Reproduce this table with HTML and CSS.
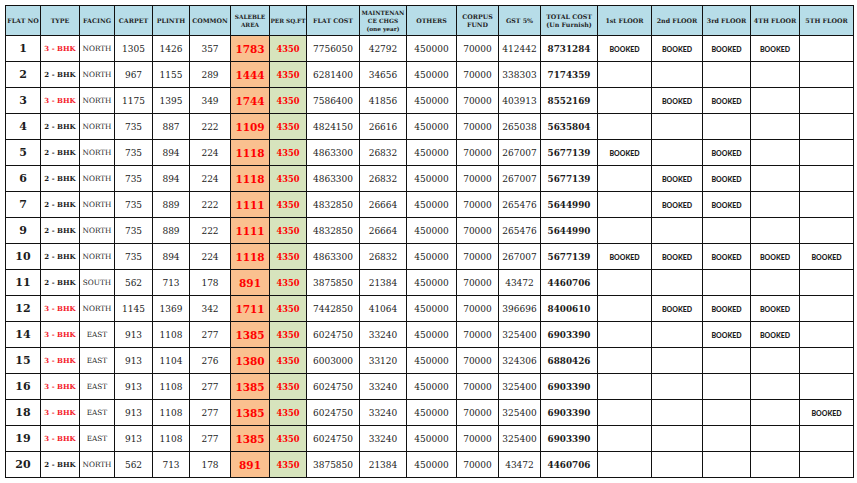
FILE: index.html
```html
<!DOCTYPE html>
<html>
<head>
<meta charset="utf-8">
<link rel="stylesheet" href="styles.css">
</head>
<body>
<table class="sheet">
<colgroup>
<col class="w35"><col class="w39"><col class="w35"><col class="w38"><col class="w37"><col class="w41"><col class="w39"><col class="w37"><col class="w53"><col class="w47"><col class="w50"><col class="w42"><col class="w42"><col class="w57"><col class="w54"><col class="w51"><col class="w48"><col class="w49"><col class="w54">
</colgroup>
<thead>
<tr>
<th>FLAT NO</th><th>TYPE</th><th>FACING</th><th>CARPET</th><th>PLINTH</th><th>COMMON</th><th class="sm">SALEBLE<br>AREA</th><th class="sm">PER SQ.FT</th><th>FLAT COST</th><th class="sm">MAINTENAN<br>CE CHGS<br>(one year)</th><th>OTHERS</th><th>CORPUS<br>FUND</th><th>GST 5%</th><th>TOTAL COST<br>(Un Furnish)</th><th>1st FLOOR</th><th>2nd FLOOR</th><th>3rd FLOOR</th><th>4TH FLOOR</th><th>5TH FLOOR</th>
</tr>
</thead>
<tbody>
<tr><td class="no">1</td><td class="type red">3 - BHK</td><td class="face">NORTH</td><td>1305</td><td>1426</td><td>357</td><td class="sale">1783</td><td class="rate">4350</td><td>7756050</td><td>42792</td><td>450000</td><td>70000</td><td>412442</td><td class="total">8731284</td><td class="bk">BOOKED</td><td class="bk">BOOKED</td><td class="bk">BOOKED</td><td class="bk">BOOKED</td><td></td></tr>
<tr><td class="no">2</td><td class="type">2 - BHK</td><td class="face">NORTH</td><td>967</td><td>1155</td><td>289</td><td class="sale">1444</td><td class="rate">4350</td><td>6281400</td><td>34656</td><td>450000</td><td>70000</td><td>338303</td><td class="total">7174359</td><td></td><td></td><td></td><td></td><td></td></tr>
<tr><td class="no">3</td><td class="type red">3 - BHK</td><td class="face">NORTH</td><td>1175</td><td>1395</td><td>349</td><td class="sale">1744</td><td class="rate">4350</td><td>7586400</td><td>41856</td><td>450000</td><td>70000</td><td>403913</td><td class="total">8552169</td><td></td><td class="bk">BOOKED</td><td class="bk">BOOKED</td><td></td><td></td></tr>
<tr><td class="no">4</td><td class="type">2 - BHK</td><td class="face">NORTH</td><td>735</td><td>887</td><td>222</td><td class="sale">1109</td><td class="rate">4350</td><td>4824150</td><td>26616</td><td>450000</td><td>70000</td><td>265038</td><td class="total">5635804</td><td></td><td></td><td></td><td></td><td></td></tr>
<tr><td class="no">5</td><td class="type">2 - BHK</td><td class="face">NORTH</td><td>735</td><td>894</td><td>224</td><td class="sale">1118</td><td class="rate">4350</td><td>4863300</td><td>26832</td><td>450000</td><td>70000</td><td>267007</td><td class="total">5677139</td><td class="bk">BOOKED</td><td></td><td class="bk">BOOKED</td><td></td><td></td></tr>
<tr><td class="no">6</td><td class="type">2 - BHK</td><td class="face">NORTH</td><td>735</td><td>894</td><td>224</td><td class="sale">1118</td><td class="rate">4350</td><td>4863300</td><td>26832</td><td>450000</td><td>70000</td><td>267007</td><td class="total">5677139</td><td></td><td class="bk">BOOKED</td><td class="bk">BOOKED</td><td></td><td></td></tr>
<tr><td class="no">7</td><td class="type">2 - BHK</td><td class="face">NORTH</td><td>735</td><td>889</td><td>222</td><td class="sale">1111</td><td class="rate">4350</td><td>4832850</td><td>26664</td><td>450000</td><td>70000</td><td>265476</td><td class="total">5644990</td><td></td><td class="bk">BOOKED</td><td class="bk">BOOKED</td><td></td><td></td></tr>
<tr><td class="no">9</td><td class="type">2 - BHK</td><td class="face">NORTH</td><td>735</td><td>889</td><td>222</td><td class="sale">1111</td><td class="rate">4350</td><td>4832850</td><td>26664</td><td>450000</td><td>70000</td><td>265476</td><td class="total">5644990</td><td></td><td></td><td></td><td></td><td></td></tr>
<tr><td class="no">10</td><td class="type">2 - BHK</td><td class="face">NORTH</td><td>735</td><td>894</td><td>224</td><td class="sale">1118</td><td class="rate">4350</td><td>4863300</td><td>26832</td><td>450000</td><td>70000</td><td>267007</td><td class="total">5677139</td><td class="bk">BOOKED</td><td class="bk">BOOKED</td><td class="bk">BOOKED</td><td class="bk">BOOKED</td><td class="bk">BOOKED</td></tr>
<tr><td class="no">11</td><td class="type">2 - BHK</td><td class="face">SOUTH</td><td>562</td><td>713</td><td>178</td><td class="sale">891</td><td class="rate">4350</td><td>3875850</td><td>21384</td><td>450000</td><td>70000</td><td>43472</td><td class="total">4460706</td><td></td><td></td><td></td><td></td><td></td></tr>
<tr><td class="no">12</td><td class="type red">3 - BHK</td><td class="face">NORTH</td><td>1145</td><td>1369</td><td>342</td><td class="sale">1711</td><td class="rate">4350</td><td>7442850</td><td>41064</td><td>450000</td><td>70000</td><td>396696</td><td class="total">8400610</td><td></td><td class="bk">BOOKED</td><td class="bk">BOOKED</td><td class="bk">BOOKED</td><td></td></tr>
<tr><td class="no">14</td><td class="type red">3 - BHK</td><td class="face">EAST</td><td>913</td><td>1108</td><td>277</td><td class="sale">1385</td><td class="rate">4350</td><td>6024750</td><td>33240</td><td>450000</td><td>70000</td><td>325400</td><td class="total">6903390</td><td></td><td></td><td class="bk">BOOKED</td><td class="bk">BOOKED</td><td></td></tr>
<tr><td class="no">15</td><td class="type red">3 - BHK</td><td class="face">EAST</td><td>913</td><td>1104</td><td>276</td><td class="sale">1380</td><td class="rate">4350</td><td>6003000</td><td>33120</td><td>450000</td><td>70000</td><td>324306</td><td class="total">6880426</td><td></td><td></td><td></td><td></td><td></td></tr>
<tr><td class="no">16</td><td class="type red">3 - BHK</td><td class="face">EAST</td><td>913</td><td>1108</td><td>277</td><td class="sale">1385</td><td class="rate">4350</td><td>6024750</td><td>33240</td><td>450000</td><td>70000</td><td>325400</td><td class="total">6903390</td><td></td><td></td><td></td><td></td><td></td></tr>
<tr><td class="no">18</td><td class="type red">3 - BHK</td><td class="face">EAST</td><td>913</td><td>1108</td><td>277</td><td class="sale">1385</td><td class="rate">4350</td><td>6024750</td><td>33240</td><td>450000</td><td>70000</td><td>325400</td><td class="total">6903390</td><td></td><td></td><td></td><td></td><td class="bk">BOOKED</td></tr>
<tr><td class="no">19</td><td class="type red">3 - BHK</td><td class="face">EAST</td><td>913</td><td>1108</td><td>277</td><td class="sale">1385</td><td class="rate">4350</td><td>6024750</td><td>33240</td><td>450000</td><td>70000</td><td>325400</td><td class="total">6903390</td><td></td><td></td><td></td><td></td><td></td></tr>
<tr><td class="no">20</td><td class="type">2 - BHK</td><td class="face">NORTH</td><td>562</td><td>713</td><td>178</td><td class="sale">891</td><td class="rate">4350</td><td>3875850</td><td>21384</td><td>450000</td><td>70000</td><td>43472</td><td class="total">4460706</td><td></td><td></td><td></td><td></td><td></td></tr>
</tbody>
</table>
<p class="note">Note : all prices subject to change as per market conditions</p>
</body>
</html>
```
FILE: styles.css
```css
html, body {
  margin: 0;
  padding: 0;
  background: #fff;
}
body {
  padding: 5px 0 0 5px;
  font-family: "DejaVu Serif", "Liberation Serif", serif;
  color: #1c1c1c;
}
.sheet {
  border-collapse: collapse;
  table-layout: fixed;
  width: 848px;
  border-top: 1px solid #8a8a8a;
  border-left: 1px solid #8a8a8a;
}
.w35 { width: 35px; }
.w37 { width: 37px; }
.w38 { width: 38px; }
.w39 { width: 39px; }
.w41 { width: 41px; }
.w42 { width: 42px; }
.w47 { width: 47px; }
.w48 { width: 48px; }
.w49 { width: 49px; }
.w50 { width: 50px; }
.w51 { width: 51px; }
.w53 { width: 53px; }
.w54 { width: 54px; }
.w57 { width: 57px; }
th, td {
  border: 1px solid #111;
  padding: 0;
  text-align: center;
  vertical-align: middle;
  overflow: hidden;
  white-space: nowrap;
}
thead tr { height: 30px; }
tbody tr { height: 26px; }
th {
  background: #b7dde8;
  font-size: 6.3px;
  font-weight: bold;
  line-height: 8px;
  color: #1f1f1f;
}
th.sm { font-size: 5.8px; }
td {
  font-size: 9px;
}
td.no {
  font-size: 11px;
  font-weight: bold;
}
td.type {
  font-size: 7px;
  font-weight: bold;
}
td.red { color: #f4202a; }
td.face {
  font-size: 7.3px;
}
td.sale {
  background: #fac08f;
  color: #ff0000;
  font-weight: bold;
  font-size: 10.5px;
}
td.rate {
  background: #d7e4bd;
  color: #ff0000;
  font-weight: bold;
  font-size: 8.3px;
}
td.total {
  font-weight: bold;
  font-size: 8.8px;
}
td.bk {
  font-family: "Lato", "Open Sans", sans-serif;
  font-weight: 900;
  font-size: 7px;
}
.note {
  margin: 4px 0 0 40px;
  font-size: 9px;
  color: #bbb;
}
```
